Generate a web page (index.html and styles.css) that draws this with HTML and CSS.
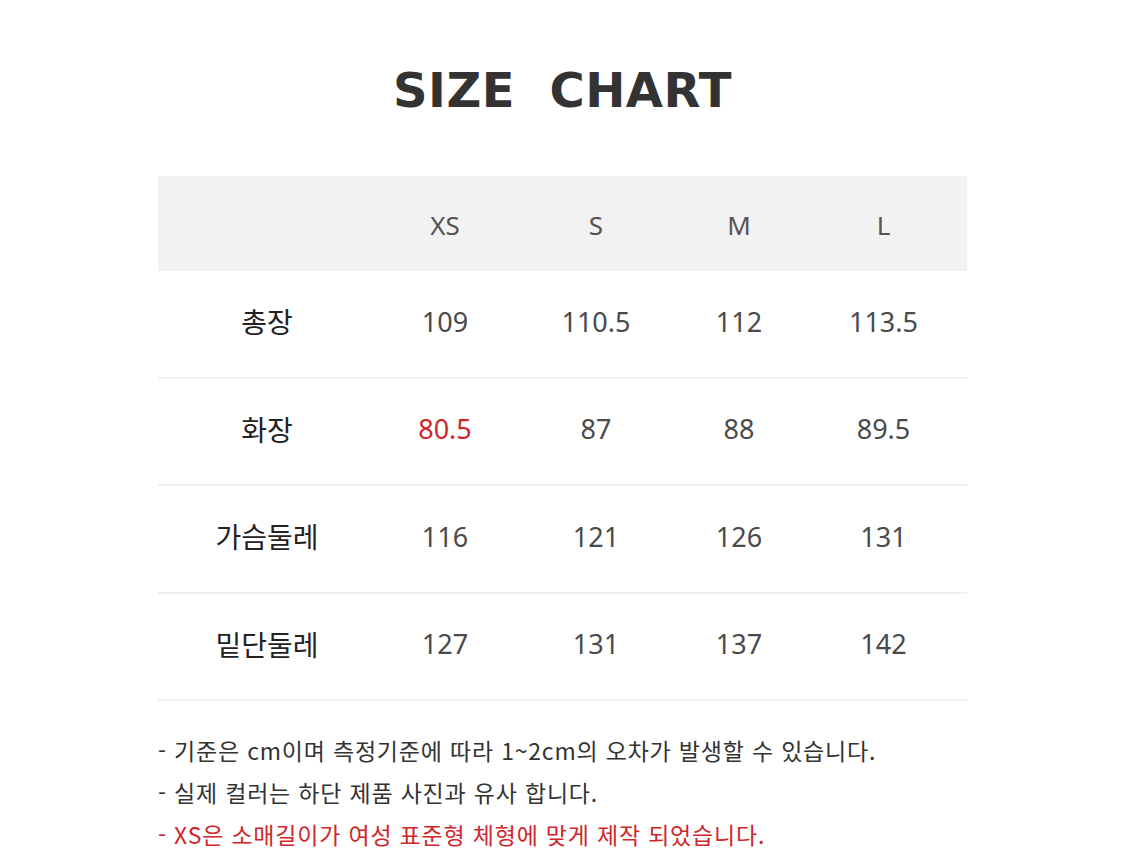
FILE: index.html
```html
<!DOCTYPE html>
<html lang="ko">
<head>
<meta charset="utf-8">
<link rel="stylesheet" href="styles.css">
</head>
<body>
<main class="page">
  <h1 class="title">SIZE&nbsp;&nbsp;CHART</h1>
  <div class="chart">
    <div class="row head">
      <div class="cell"></div>
      <div class="cell">XS</div>
      <div class="cell">S</div>
      <div class="cell">M</div>
      <div class="cell">L</div>
    </div>
    <div class="row">
      <div class="cell label">총장</div>
      <div class="cell">109</div>
      <div class="cell">110.5</div>
      <div class="cell">112</div>
      <div class="cell">113.5</div>
    </div>
    <div class="row">
      <div class="cell label">화장</div>
      <div class="cell red">80.5</div>
      <div class="cell">87</div>
      <div class="cell">88</div>
      <div class="cell">89.5</div>
    </div>
    <div class="row">
      <div class="cell label">가슴둘레</div>
      <div class="cell">116</div>
      <div class="cell">121</div>
      <div class="cell">126</div>
      <div class="cell">131</div>
    </div>
    <div class="row">
      <div class="cell label">밑단둘레</div>
      <div class="cell">127</div>
      <div class="cell">131</div>
      <div class="cell">137</div>
      <div class="cell">142</div>
    </div>
  </div>
  <ul class="notes">
    <li>- 기준은 cm이며 측정기준에 따라 1~2cm의 오차가 발생할 수 있습니다.</li>
    <li>- 실제 컬러는 하단 제품 사진과 유사 합니다.</li>
    <li class="warn">- XS은 소매길이가 여성 표준형 체형에 맞게 제작 되었습니다.</li>
  </ul>
</main>
</body>
</html>
```
FILE: styles.css
```css
html, body {
  margin: 0;
  padding: 0;
  background: #fff;
}
body {
  font-family: "Noto Sans", "Noto Sans CJK KR", sans-serif;
  color: #333;
}
.page {
  width: 809px;
  margin: 0 auto;
  padding-top: 55px;
}
.title {
  margin: 0;
  text-align: center;
  font-family: "DejaVu Sans", "Noto Sans", sans-serif;
  font-weight: 700;
  font-size: 48px;
  line-height: 70px;
  letter-spacing: 0.5px;
  color: #333;
}
.chart {
  margin-top: 51px;
}
.row {
  box-sizing: border-box;
  display: grid;
  grid-template-columns: 218px 138px 164px 122px 167px;
  height: 107.5px;
  padding-bottom: 5px;
  align-items: center;
  border-bottom: 2px solid #f0f0f0;
}
.row.head {
  height: 95px;
  padding-bottom: 0;
  background: #f2f2f2;
  border-bottom: none;
}
.cell {
  text-align: center;
  font-size: 27px;
  color: #4a4a4a;
  font-weight: 400;
}
.head .cell {
  font-size: 26px;
  color: #555;
  padding-top: 3px;
}
.cell.label {
  font-family: "Noto Sans CJK KR", sans-serif;
  font-size: 28px;
  font-weight: 400;
  color: #222;
}
.cell.red {
  color: #d0262b;
}
.notes {
  list-style: none;
  margin: 28px 0 0;
  padding: 0;
  font-family: "Noto Sans CJK KR", sans-serif;
  font-size: 23px;
  letter-spacing: 0.8px;
  color: #333;
}
.notes li {
  line-height: 42px;
}
.notes .warn {
  color: #d0262b;
}
```
